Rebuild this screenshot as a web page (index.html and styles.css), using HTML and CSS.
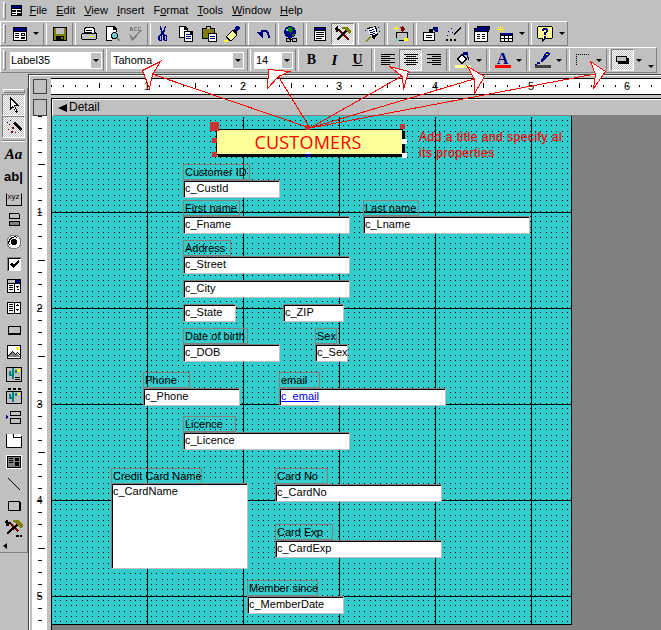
FILE: index.html
```html
<!DOCTYPE html>
<html lang="en">
<head>
<meta charset="utf-8">
<title>Form design</title>
<link rel="stylesheet" href="styles.css">
</head>
<body>
<div class="app">
  <div class="menubar">
    <span class="grip"></span>
    <svg class="ic menu-ic" viewBox="0 0 16 16"><path fill="#000" d="M1 1h14v14H1z"/><path fill="#000080" d="M2 2h12v3H2z"/><path fill="#fff" d="M2 6h12v8H2z"/><path fill="#000" d="M3 7h4v1H3zM3 9h4v1H3zM3 11h4v1H3zM9 7h4v3H9zM9 11h4v2H9z"/><path fill="#fff" d="M10 8h2v1h-2z"/></svg>
    <span class="mi"><u>F</u>ile</span><span class="mi"><u>E</u>dit</span><span class="mi"><u>V</u>iew</span><span class="mi"><u>I</u>nsert</span><span class="mi">F<u>o</u>rmat</span><span class="mi"><u>T</u>ools</span><span class="mi"><u>W</u>indow</span><span class="mi"><u>H</u>elp</span>
  </div>

  <div class="toolbar tb-std">
    <span class="grip"></span>
    <span class="btn"><svg class="ic" viewBox="0 0 16 16"><path fill="#000" d="M1 1h14v14H1z"/><path fill="#000080" d="M2 2h12v3H2z"/><path fill="#fff" d="M2 6h12v8H2z"/><path fill="#000" d="M3 7h4v1H3zM3 9h4v1H3zM3 11h4v1H3zM9 7h4v3H9zM9 11h4v2H9z"/><path fill="#fff" d="M10 8h2v1h-2z"/></svg></span><span class="drop"></span>
    <span class="sep sep7"></span>
    <span class="btn"><svg class="ic" viewBox="0 0 16 16"><path fill="#000" d="M1 1h14v14H1z"/><path fill="#808000" d="M2 2h12v12H2z"/><path fill="#c0c0c0" d="M4 2h8v6H4z"/><path fill="#000" d="M4 10h8v4H4z"/><path fill="#808000" d="M9 11h2v2H9z"/></svg></span>
    <span class="sep"></span>
    <span class="btn"><svg class="ic" viewBox="0 0 16 16"><path fill="#000" d="M4 1h9v1h1v4h1v1h1v6h-1v1H1v-1H0V8h1V7h2V2h1z"/><path fill="#fff" d="M5 2h7v1h1v4H4V3h1z"/><path fill="#c0c0c0" d="M1 8h14v5H1z"/><path fill="#ff0" d="M9 10h3v1H9z"/><path fill="#000" d="M5 4h6v1H5zM4 6h7v1H4z"/></svg></span>
    <span class="btn"><svg class="ic" viewBox="0 0 16 16"><path fill="#000" d="M2 0h8l3 3v3h-1V4H9V1H3v13h5v1H2z"/><path fill="#fff" d="M3 1h6v3h3v2H8v1H7v4h1v3H3z"/><circle cx="10.5" cy="9.5" r="3" fill="#66cccc" stroke="#000"/><path stroke="#808080" stroke-width="2" d="M13 12l3 3"/></svg></span>
    <span class="btn"><svg class="ic" viewBox="0 0 16 16"><path fill="#808080" d="M2 8h1l3 4 7-8h2l-9 11H5zM3 1h2v1l1 1v1L5 5H3V1zM7 1h3v1H8v2h2v1H7zM11 1h3v1h-2v2h2v1h-3z"/></svg></span>
    <span class="sep sep5"></span>
    <span class="btn"><svg class="ic" viewBox="0 0 16 16"><path fill="#000080" d="M5 0h1l2 6 2-6h1L9 8l2 1 1 1v4l-1 1H9l-1-1v-4L7.500 9 7 10v4l-1 1H4l-1-1v-4l1-1 2-1zM4.500 10v4h1v-4zM9.500 10v4h1v-4z"/></svg></span>
    <span class="btn"><svg class="ic" viewBox="0 0 16 16"><path fill="#000" d="M1 0h6l3 3v2h5v11H6v-4H1z"/><path fill="#fff" d="M2 1h4v3h3v1H6v6H2z"/><path fill="#fff" d="M7 6h5v3h2v6H7z"/><path fill="#000080" d="M8 8h5v1H8zM8 10h5v1H8zM8 12h5v1H8z"/></svg></span>
    <span class="btn"><svg class="ic" viewBox="0 0 16 16"><path fill="#000" d="M1 2h4V0h5v2h4v5h2v9H7v-3H1z"/><path fill="#808000" d="M2 3h11v4H7v5H2z"/><path fill="#c0c0c0" d="M6 1h3v2H6z"/><path fill="#fff" d="M8 8h7v7H8z"/><path fill="#000080" d="M9 10h5v1H9zM9 12h5v1H9z"/></svg></span>
    <span class="btn"><svg class="ic" viewBox="0 0 16 16"><path fill="#000080" d="M12 0h2l2 2v1l-4 3-2-2z"/><path fill="#000" d="M8 4h2l3 3v2L7 15H5L2 12v-2z"/><path fill="#ffff99" d="M8 5l4 4-5 5-4-3z"/><path fill="#ff0" d="M0 14h4v2H0z"/></svg></span>
    <span class="sep sep8"></span>
    <span class="btn"><svg class="ic" viewBox="0 0 16 16"><path fill="none" stroke="#000080" stroke-width="2" d="M6 6c3-3 8-1 8 6"/><path fill="#000080" d="M1 6h7v7z"/></svg></span>
    <span class="sep sep5"></span>
    <span class="btn"><svg class="ic" viewBox="0 0 16 16"><circle cx="7" cy="6" r="6" fill="#000080"/><path fill="#008000" d="M5 1h4l1 3-3 3-2-2zM9 8h3l-2 3z"/><path fill="#66cccc" d="M3 3h2v2H3z"/><path fill="none" stroke="#000" d="M3 12h4v3H3zM9 12h4v3H9zM6 13.500h4"/></svg></span>
    <span class="sep"></span>
    <span class="btn"><svg class="ic" viewBox="0 0 16 16"><path fill="#000" d="M2 1h12v14H2z"/><path fill="#fff" d="M3 5h10v9H3z"/><path fill="#000080" d="M3 2h10v2H3z"/><path fill="#000" d="M4 6h8v1H4zM4 8h8v1H4zM4 10h8v1H4zM4 12h6v1H4z"/></svg></span>
    <span class="btn on"><svg class="ic" viewBox="0 0 16 16"><path fill="none" stroke="#800000" stroke-width="2" d="M4 4l10 10"/><path fill="#000" d="M0 2l3-2v3h2l-2 3H1z"/><path fill="none" stroke="#000" stroke-width="2" d="M2 14l9-9"/><path fill="#808000" d="M7 1h5l4 4v2l-2 1-5-5H7z"/></svg></span>
    <span class="sep"></span>
    <span class="btn"><svg class="ic" viewBox="0 0 16 16"><path fill="#000" d="M3 2l9-2 2 9-2 1-2 4-1-1z"/><path fill="#fff" d="M4 3l7-2 2 7-7 2z"/><path fill="#000080" d="M5 4l5-1v1l-5 1zM6 6l5-1v1l-5 1zM6 8l5-1v1l-5 1z"/><path fill="#808000" d="M1 15l5-5 1 1-5 5z"/><path fill="#000080" d="M14 1h1v1h-1zM15 5h1v1h-1zM1 4h1v1H1z"/></svg></span>
    <span class="sep"></span>
    <span class="btn"><svg class="ic" viewBox="0 0 16 16"><path fill="#ff0" d="M3 0h1v5H3zM0 2h6v1H0z"/><path fill="#000" d="M3 6h12v9H3z"/><path fill="#c0c0c0" d="M4 7h10v7H4z"/><path fill="#66cccc" d="M3 11l3 4H3z"/><path fill="#ff0" d="M11 12h4v3h-4z"/><path fill="#800000" d="M7 1l3-1 2 3-3 3z"/></svg></span>
    <span class="sep"></span>
    <span class="btn"><svg class="ic" viewBox="0 0 16 16"><path fill="#000" d="M1 6h6V3h4v3h2v9H1z"/><path fill="#fff" d="M2 7h10v7H2z"/><path fill="#000" d="M4 9h6v1H4zM4 11h6v1H4z"/><path fill="#000080" d="M11 1h5v5h-2l-3-2z"/></svg></span>
    <span class="btn"><svg class="ic" viewBox="0 0 16 16"><path fill="#000" d="M8 8l7-7 1 1-7 7zM1 13h2v2H1zM5 13h2v2H5zM9 13h2v2H9z"/><path fill="#000080" d="M3 5h1v1H3zM6 2h1v1H6zM7 6h1v1H7zM2 9h1v1H2z"/></svg></span>
    <span class="sep"></span>
    <span class="btn"><svg class="ic" viewBox="0 0 16 16"><path fill="#000" d="M3 0h13v4h-1v2H0V2h3z"/><path fill="#000080" d="M4 1h11v2H4zM1 3h12v2H1z"/><path fill="#000" d="M0 5h14v11H0z"/><path fill="#fff" d="M1 6h12v9H1z"/><path fill="#000" d="M3 8h3v1H3zM3 10h3v1H3zM3 12h3v1H3zM8 8h3v1H8zM8 10h3v1H8zM8 12h3v1H8z"/></svg></span>
    <span class="btn"><svg class="ic" viewBox="0 0 16 16"><path fill="#ff0" d="M3 0h1v6H3zM0 3h7v1H0zM1 1h1v1H1zM5 1h1v1H5zM1 5h1v1H1zM5 5h1v1H5z"/><path fill="#000" d="M3 7h13v9H3z"/><path fill="#000080" d="M4 7h11v2H4z"/><path fill="#fff" d="M4 10h11v5H4z"/><path fill="#000" d="M7 10h1v5H7zM11 10h1v5h-1zM4 12h11v1H4z"/></svg></span><span class="drop drop11"></span>
    <span class="sep"></span>
    <span class="btn"><svg class="ic" viewBox="0 0 16 16"><path fill="#000" d="M1 0h14v1h1v11h-1v1H8l-3 3v-3H1v-1H0V1h1z"/><path fill="#ffff99" d="M1 1h14v11H7l-1 1v-1H1z"/><path fill="#000080" d="M5 3h1V2h4v1h1v3h-1v1H9v2H7V6h2V4H7v1H5zM7 10h2v2H7z"/></svg></span><span class="drop drop11"></span>
  </div>

  <div class="toolbar tb-fmt">
    <span class="grip"></span>
    <span class="combo combo-obj"><span class="val">Label35</span><span class="cbtn"></span></span>
    <span class="sep"></span>
    <span class="combo combo-font"><span class="val">Tahoma</span><span class="cbtn"></span></span>
    <span class="sep sep10"></span>
    <span class="combo combo-size"><span class="val">14</span><span class="cbtn"></span></span>
    <span class="sep sep7"></span>
    <span class="btn"><b class="tx-b">B</b></span>
    <span class="btn"><i class="tx-i">I</i></span>
    <span class="btn"><u class="tx-u">U</u></span>
    <span class="sep sep7"></span>
    <span class="btn"><svg class="ic" viewBox="0 0 16 16"><path fill="#000" d="M1 2h14v1H1zM1 4h9v1H1zM1 6h14v1H1zM1 8h9v1H1zM1 10h14v1H1zM1 12h9v1H1z"/></svg></span>
    <span class="btn on"><svg class="ic" viewBox="0 0 16 16"><path fill="#000" d="M1 2h14v1H1zM3 4h10v1H3zM1 6h14v1H1zM3 8h10v1H3zM1 10h14v1H1zM3 12h10v1H3z"/></svg></span>
    <span class="btn"><svg class="ic" viewBox="0 0 16 16"><path fill="#000" d="M1 2h14v1H1zM6 4h9v1H6zM1 6h14v1H1zM6 8h9v1H6zM1 10h14v1H1zM6 12h9v1H6z"/></svg></span>
    <span class="sep sep6"></span>
    <span class="btn"><svg class="ic" viewBox="0 0 16 16"><path fill="#000" d="M7 2l6 5-6 5-6-5z"/><path fill="#fff" d="M7 4l4 3-4 3-4-3z"/><path fill="#000080" d="M8 0h5v2l1 6h-1l-1-5H8z"/><path fill="#ffff99" d="M0 13h16v3H0z"/></svg></span><span class="drop"></span>
    <span class="sep sep7"></span>
    <span class="btn"><span class="tx-a">A</span></span><span class="drop"></span>
    <span class="sep sep7"></span>
    <span class="btn"><svg class="ic" viewBox="0 0 16 16"><path fill="#000080" d="M11 0h3l1 2-7 8H6V8z"/><path fill="#ff0" d="M11 2h2v1h-2z"/><path fill="#000080" d="M2 10h3v2H2zM0 12h2v1H0z"/><path fill="#404040" d="M0 13h16v3H0z"/></svg></span><span class="drop"></span>
    <span class="sep sep7"></span>
    <span class="btn"><svg class="ic" viewBox="0 0 16 16"><path fill="#000" d="M1 2h1v1H1zM3 2h1v1H3zM5 2h1v1H5zM7 2h1v1H7zM9 2h1v1H9zM11 2h1v1h-1zM13 2h1v1h-1zM1 4h1v1H1zM1 6h1v1H1zM1 8h1v1H1zM1 10h1v1H1zM1 12h1v1H1z"/></svg></span><span class="drop"></span>
    <span class="sep sep7"></span>
    <span class="btn on"><svg class="ic" viewBox="0 0 16 16"><path fill="#000" d="M1 4h11v2h2v6H3v-2H1z"/><path fill="#c0c0c0" d="M2 5h9v4H2z"/></svg></span><span class="drop drop9"></span>
    <span class="drop drop-end"></span>
  </div>

  <div class="workspace">
    <div class="toolbox">
      <span class="hgrip"></span>
      <span class="tool on"><svg class="ic" viewBox="0 0 16 16"><path fill="#000" d="M4 0l9 9H9l3 6-2 1-3-6-3 3z"/><path fill="#fff" d="M5 2.500l5.500 5.500H7.500l3 6-1 .5-3-6-1.500 2z"/></svg></span>
      <span class="tool on"><svg class="ic" viewBox="0 0 16 16"><path fill="#000" d="M7 4l2-2 7 8-2 2z"/><path fill="#800000" d="M3 5h1v1H3zM6 8h2v2H6zM2 10h1v1H2zM5 12h2v2H5zM9 13h1v1H9z"/><path fill="#000080" d="M4 1h1v1H4zM1 3h1v1H1z"/></svg></span>
      <span class="tbsep"></span>
      <span class="tool"><i class="tx-aa">Aa</i></span>
      <span class="tool"><b class="tx-ab">ab|</b></span>
      <span class="tool"><span class="frame-xyz">xyz</span></span>
      <span class="tool"><svg class="ic" viewBox="0 0 16 16"><path fill="#000" d="M3 1h10v1h1v5H3zM3 9h11v5H3z"/><path fill="#c0c0c0" d="M4 2h9v4H4z"/><path fill="#808080" d="M4 10h9v3H4z"/></svg></span>
      <span class="tool"><svg class="ic" viewBox="0 0 16 16"><circle cx="8" cy="8" r="7" fill="#fff" stroke="#808080"/><circle cx="8" cy="8" r="3" fill="#000"/><path fill="none" stroke="#000" d="M3.500 11.500a6 6 0 0 1 8-8"/></svg></span>
      <span class="tool"><svg class="ic" viewBox="0 0 16 16"><path fill="#808080" d="M1 1h14v14H1z"/><path fill="#000" d="M2 2h12v12H2z"/><path fill="#fff" d="M3 3h12v12H3z"/><path fill="#000" d="M4 8l2-1 2 2 4-5h1v2l-5 6H7z"/></svg></span>
      <span class="tool"><svg class="ic" viewBox="0 0 16 16"><path fill="#000" d="M1 1h14v14H1z"/><path fill="#c0c0c0" d="M2 2h7v3H2z"/><path fill="#000080" d="M10 2h4v3h-4z"/><path fill="#fff" d="M2 6h12v8H2z"/><path fill="#000" d="M3 7h4v1H3zM3 9h4v1H3zM3 11h4v1H3zM8 6h1v8H8zM10 8h3l-1.500 2zM10 12h3l-1.500-1.500z"/></svg></span>
      <span class="tool"><svg class="ic" viewBox="0 0 16 16"><path fill="#000" d="M1 2h14v12H1z"/><path fill="#fff" d="M2 3h12v10H2z"/><path fill="#000" d="M3 4h4v1H3zM3 6h4v1H3zM3 8h4v1H3zM3 10h4v1H3zM8 3h1v10H8zM10 6h3l-1.500-2zM10 9h3l-1.500 2z"/></svg></span>
      <span class="tool"><svg class="ic" viewBox="0 0 16 16"><path fill="#fff" d="M2 4h12v8H2z"/><path fill="#000" d="M2 4h12v1H2zM2 4h1v7H2zM2 11h13v2H2zM14 4h1v9h-1z"/><path fill="#c0c0c0" d="M3 5h11v6H3z"/></svg></span>
      <span class="tool"><svg class="ic" viewBox="0 0 16 16"><path fill="#000" d="M1 1h14v14H1z"/><path fill="#fff" d="M2 2h12v12H2z"/><path fill="#ff0" d="M10 3h3v3h-3z"/><path fill="#808080" d="M2 13l4-5 3 3 2-2 3 4z"/><path fill="#000" d="M2 12l4-5 3 3 2-2 3 3v1l-3-3-2 2-3-3-4 5z"/></svg></span>
      <span class="tool"><svg class="ic" viewBox="0 0 16 16"><path fill="#000" d="M0 1h16v15H0z"/><path fill="#c0c0c0" d="M1 2h14v13H1z"/><path fill="#ff0" d="M11 3h3v3h-3z"/><path fill="#008080" d="M6 2h2v11H6zM3 5h2v3h1v2H3zM9 4h2v3H9v2z"/><path fill="#000" d="M9 11h5v1H9zM9 13h5v1H9z"/></svg></span>
      <span class="tool"><svg class="ic" viewBox="0 0 16 16"><path fill="#000" d="M0 3h16v13H0z"/><path fill="#c0c0c0" d="M1 4h14v11H1z"/><path fill="#000" d="M2 0h3v2H2zM7 0h3v2H7zM12 0h3v2h-3z"/><path fill="#008080" d="M6 4h2v10H6zM3 6h2v3h1v2H3zM9 5h2v3H9v2z"/><path fill="#ff0" d="M12 5h2v2h-2z"/></svg></span>
      <span class="tool"><svg class="ic" viewBox="0 0 16 16"><path fill="#000" d="M4 1h11v1H4zM4 5h11v1H4zM4 1h1v5H4zM14 1h1v5h-1zM4 8h11v1H4zM4 13h11v1H4zM4 8h1v6H4zM14 8h1v6h-1z"/><path fill="#000080" d="M0 5l3 2-3 2z"/></svg></span>
      <span class="tool"><svg class="ic" viewBox="0 0 16 16"><path fill="#fff" d="M0 2h6v2h2V2h7v2h1v11H0z"/><path fill="#000" d="M0 2h1v13H0zM0 15h16v1H0zM15 4h1v12h-1zM7 2h1v3h7v1H7z"/></svg></span>
      <span class="tool"><svg class="ic" viewBox="0 0 16 16"><path fill="#fff" d="M0 1h16v14H0z"/><path fill="#000" d="M1 2h14v12H1z"/><path fill="#808080" d="M2 3h12v10H2z"/><path fill="#000" d="M3 4h4v1H3zM9 4h4v3H9zM3 6h4v1H3zM3 8h4v1H3zM9 8h4v4H9z"/></svg></span>
      <span class="tool"><svg class="ic" viewBox="0 0 16 16"><path stroke="#000" fill="none" d="M2 2l12 12"/></svg></span>
      <span class="tool"><svg class="ic" viewBox="0 0 16 16"><path fill="none" stroke="#000" d="M2.500 3.500h11v9h-11z"/><path fill="#000" d="M2 12h13v1H2zM14 4h1v9h-1z"/></svg></span>
      <span class="tool"><svg class="ic ic-lg" viewBox="0 0 16 16"><path fill="none" stroke="#800000" stroke-width="2" d="M4 3l8 8"/><path fill="#000" d="M0 2l3-2v3h2l-2 3H1zM10 14h2v2h-2zM13 14h2v2h-2z"/><path fill="none" stroke="#000" stroke-width="2" d="M2 13l9-8"/><path fill="#808000" d="M7 1h5l4 4v2l-2 1-5-5H7z"/></svg></span>
      <span class="more"></span>
    </div>

    <div class="window">
      <div class="corner"></div>
      <div class="hruler"><span>1</span><span>2</span><span>3</span><span>4</span><span>5</span><span>6</span></div>
      <div class="corner corner2"></div>
      <div class="section"><span class="sec-arrow"></span>Detail</div>
      <div class="vruler"><span>1</span><span>2</span><span>3</span><span>4</span><span>5</span></div>
      <div class="client">
        <div class="canvas">
          <svg class="grid" width="520" height="508" viewBox="0 0 520 508">
            <defs>
              <g id="dotrow"><path d="M0 0h1v1H0zM5 0h1v1H5zM11 0h1v1h-1z"/></g>
              <pattern id="dots" patternUnits="userSpaceOnUse" x="3" y="4" width="16" height="16">
                <use href="#dotrow" y="0"/><use href="#dotrow" y="5"/><use href="#dotrow" y="11"/>
              </pattern>
              <pattern id="lines" patternUnits="userSpaceOnUse" width="96" height="96">
                <path d="M95 0h1v96h-1zM0 0h96v1H0z"/>
              </pattern>
            </defs>
            <rect width="520" height="508" fill="url(#dots)"/>
            <rect y="1" width="520" height="507" fill="url(#lines)"/>
          </svg>

          <div class="title">CUSTOMERS</div>
          <span class="h h-tl"></span><span class="h h-ml"></span><span class="h h-bl"></span><span class="h h-tm"></span><span class="h h-tr"></span>
          <span class="h2 h-mr"></span><span class="h2 h-br"></span><span class="h3 h-bm"></span>
          <div class="note">Add a title and specify al<br>its properties</div>

          <div class="lbl l-custid">Customer ID</div><div class="fld f-custid">c_CustId</div>
          <div class="lbl l-fname">First name</div><div class="fld f-fname">c_Fname</div>
          <div class="lbl l-lname">Last name</div><div class="fld f-lname">c_Lname</div>
          <div class="lbl l-addr">Address</div><div class="fld f-street">c_Street</div>
          <div class="fld f-city">c_City</div>
          <div class="fld f-state">c_State</div>
          <div class="fld f-zip">c_ZIP</div>
          <div class="lbl l-dob">Date of birth</div><div class="fld f-dob">c_DOB</div>
          <div class="lbl l-sex">Sex</div><div class="fld f-sex">c_Sex</div>
          <div class="lbl l-phone">Phone</div><div class="fld f-phone">c_Phone</div>
          <div class="lbl l-email">email</div><div class="fld f-email"><a class="lnk">c_email</a></div>
          <div class="lbl l-lic">Licence</div><div class="fld f-lic">c_Licence</div>
          <div class="lbl l-ccn">Credit Card Name</div><div class="fld f-ccn">c_CardName</div>
          <div class="lbl l-cno">Card No</div><div class="fld f-cno">c_CardNo</div>
          <div class="lbl l-cexp">Card Exp</div><div class="fld f-cexp">c_CardExp</div>
          <div class="lbl l-mem">Member since</div><div class="fld f-mem">c_MemberDate</div>
        </div>
      </div>
    </div>
  </div>
</div>

<svg class="arrows" width="661" height="630" viewBox="0 0 661 630">
  <path d="M310 128L152 74M310 128L278 76M310 128L402 76M310 128L474 79M310 128L595 74" fill="none" stroke="#f00"/>
  <path class="head" d="M160.500 61.500L142.500 70.500L149.500 88.500L152.500 74.500z"/>
  <path class="head" d="M268.500 69.500L289.500 71.500L278.500 76.500L267.500 88.500z"/>
  <path class="head" d="M389.500 66.500L408.500 71.500L403.500 89.500L402.500 76.500z"/>
  <path class="head" d="M467.500 66.500L484.500 76.500L474.500 93.500L474.500 79.500z"/>
  <path class="head" d="M590.500 61.500L605.500 71.500L593.500 88.500L595.500 74.500z"/>
</svg>
</body>
</html>
```
FILE: styles.css
```css
* { box-sizing: border-box; }
html, body { margin: 0; padding: 0; }
body {
  width: 661px;
  height: 630px;
  overflow: hidden;
  position: relative;
  background: #c0c0c0;
  font: 11px/15px "Liberation Sans", sans-serif;
  color: #000;
}
.app { display: flex; flex-direction: column; height: 630px; }

.ic { width: 16px; height: 16px; display: block; shape-rendering: crispEdges; flex: none; }
.ic-lg { width: 18px; height: 18px; }

.grip {
  width: 3px;
  align-self: stretch;
  margin: 2px;
  border: 1px solid;
  border-color: #fff #808080 #808080 #fff;
  flex: none;
}

/* menu */
.menubar { height: 21px; display: flex; align-items: center; flex: none; }
.menubar .grip { margin-left: 3px; margin-right: 0; }
.menu-ic { margin: 0 2px 0 4px; width: 13px; height: 13px; }
.mi { padding: 0 4.5px; font-size: 11px; white-space: nowrap; }
.mi:first-of-type { padding-left: 5px; }

/* toolbars */
.toolbar {
  height: 25px;
  display: flex;
  align-items: center;
  flex: none;
  border: 1px solid;
  border-color: #fff #808080 #808080 #fff;
}
.tb-std { width: 568px; }
.tb-fmt { width: 657px; height: 26px; margin-top: 1px; }
.btn {
  width: 23px;
  height: 22px;
  display: flex;
  align-items: center;
  justify-content: center;
  flex: none;
}
.btn.on, .tool.on {
  border: 1px solid;
  border-color: #808080 #fff #fff #808080;
  background: repeating-conic-gradient(#fff 0 25%, #c0c0c0 0 50%) 0 0 / 2px 2px;
}
.drop {
  width: 10px;
  height: 22px;
  flex: none;
  display: flex;
  align-items: center;
  justify-content: center;
}
.drop::after, .cbtn::after, .more::after {
  content: "";
  border-top: 3px solid #000;
  border-left: 3px solid transparent;
  border-right: 3px solid transparent;
}
.drop11 { width: 11px; }
.drop9 { width: 9px; }
.drop-end { margin-left: 3px; align-items: flex-end; padding-bottom: 3px; }
.sep {
  width: 6px;
  height: 22px;
  flex: none;
  display: flex;
  justify-content: center;
}
.sep::after {
  content: "";
  width: 2px;
  height: 100%;
  border-left: 1px solid #808080;
  border-right: 1px solid #fff;
}
.sep5 { width: 5px; }
.sep6 { width: 6px; }
.sep7 { width: 7px; }
.sep8 { width: 8px; }
.sep10 { width: 10px; }

.combo {
  height: 17px;
  background: #fff;
  display: flex;
  align-items: center;
  flex: none;
  justify-content: space-between;
  margin-left: 2px;
  padding-left: 1px;
  padding-right: 1px;
}
.combo-obj { width: 92px; }
.combo-font { width: 133px; margin-left: 3px; padding-left: 2px; }
.combo-size { width: 39px; margin-left: 0; padding-left: 2px; }
.val { font-size: 11px; }
.cbtn {
  width: 10px;
  height: 15px;
  background: #c0c0c0;
  display: flex;
  align-items: center;
  justify-content: center;
}
.tx-b { font: bold 14px "Liberation Serif", serif; }
.tx-i { font: italic bold 15px "Liberation Serif", serif; }
.tx-u { font: bold 14px "Liberation Serif", serif; }
.tx-a {
  width: 16px;
  height: 16px;
  font: bold 16px/13px "Liberation Serif", serif;
  color: #000080;
  text-align: center;
  border-bottom: 3px solid #f00;
}

/* workspace */
.workspace { flex: 1; display: flex; min-height: 0; margin-top: 1px; }
.toolbox {
  width: 28px;
  flex: none;
  margin-top: 14px;
  padding: 1px 0 0 0;
  height: 465px;
  display: flex;
  flex-direction: column;
  align-items: center;
  border-bottom: 1px solid #808080;
  border-right: 1px solid #808080;
}
.hgrip {
  width: 22px;
  height: 4px;
  border: 1px solid;
  border-color: #fff #808080 #808080 #fff;
  margin-bottom: 1px;
  flex: none;
}
.tool {
  width: 23px;
  height: 22px;
  flex: none;
  display: flex;
  align-items: center;
  justify-content: center;
}
.tbsep {
  width: 23px;
  height: 2px;
  border-top: 1px solid #808080;
  border-bottom: 1px solid #fff;
  margin: 2px 0 1px;
  flex: none;
}
.tx-aa { font: italic bold 15px "Liberation Serif", serif; }
.tx-ab { font: bold 13px "Liberation Sans", sans-serif; }
.frame-xyz {
  width: 16px;
  height: 13px;
  border: 1px solid #000;
  border-top-color: transparent;
  font-size: 8px;
  line-height: 6px;
  text-align: center;
  margin-top: 3px;
  display: block;
}
.more { height: 14px; display: flex; align-items: center; align-self: flex-start; padding-left: 3px; }
.more::after {
  border-top: 3px solid transparent;
  border-bottom: 3px solid transparent;
  border-right: 4px solid #000;
  border-left: 0;
}

.window {
  flex: 1;
  min-width: 0;
  border-left: 1px solid #404040;
  border-top: 1px solid #404040;
  padding: 3px 0 0 3px;
  display: grid;
  grid-template-columns: 15px 1fr;
  grid-template-rows: 17px 18px 1fr;
  column-gap: 4px;
  row-gap: 3px;
  box-shadow: inset 1px 1px 0 #fff;
}
.window > .vruler, .window > .client { margin-top: -3px; }
.corner {
  margin: 1px 0 1px 1px;
  background: #c0c0c0;
  border: 1px solid;
  border-color: #fff #808080 #808080 #fff;
  outline: 1px solid #404040;
  outline-offset: -1px;
}
.corner2 { margin-bottom: 0; }
.hruler {
  background-color: #fff;
  border-top: 1px solid #000;
  border-bottom: 1px solid #000;
  padding-left: 48px;
  display: flex;
  align-items: center;
  background-image:
    linear-gradient(90deg, #000 1px, transparent 0),
    linear-gradient(90deg, #000 1px, transparent 0);
  background-size: 12px 2px, 96px 5px;
  background-position: 0 6px, 48px 4px;
  background-repeat: repeat-x;
}
.hruler span {
  flex: 0 0 96px;
  text-align: center;
}
.section {
  background: #c0c0c0;
  border-top: 1px solid #000;
  border-left: 1px solid #000;
  box-shadow: inset 1px 1px 0 #fff, inset 0 -1px 0 #808080;
  display: flex;
  align-items: center;
  padding-left: 6px;
  gap: 2px;
  font-size: 12px;
}
.sec-arrow {
  width: 0;
  height: 0;
  border-top: 4px solid transparent;
  border-bottom: 4px solid transparent;
  border-right: 9px solid #000;
}
.vruler {
  background-color: #fff;
  padding-top: 48px;
  display: flex;
  flex-direction: column;
  overflow: hidden;
  background-image:
    linear-gradient(#000 1px, transparent 0),
    linear-gradient(#000 1px, transparent 0);
  background-size: 4px 12px, 7px 96px;
  background-position: 6px 0, 6px 48px;
  background-repeat: repeat-y;
}
.vruler span {
  flex: 0 0 96px;
  display: flex;
  align-items: center;
  justify-content: center;
}
.client {
  background: #808080;
  border-left: 1px solid #000;
  overflow: hidden;
}
.canvas {
  position: relative;
  width: 520px;
  height: 509px;
  background: #33cccc;
  border-right: 1px solid #000;
  border-bottom: 1px solid #000;
}
.grid { position: absolute; left: 0; top: 0; display: block; shape-rendering: crispEdges; }

/* controls placed on the design canvas */
.lbl, .fld, .title, .note, .h, .h2, .h3 { position: absolute; white-space: nowrap; }
.lbl {
  height: 16px;
  border: 1px solid #808080;
  padding-left: 1px;
  line-height: 14px;
}
.fld {
  height: 18px;
  background: #fff;
  border: 1px solid;
  border-color: #808080 #c0c0c0 #c0c0c0 #808080;
  box-shadow: inset 1px 1px 0 #000;
  padding: 0 0 0 1px;
  line-height: 15px;
}
.lnk { color: #00f; text-decoration: underline; }

.title {
  left: 164px;
  top: 13px;
  width: 187px;
  height: 26px;
  background: #ffff99;
  border: 1px solid #000;
  box-shadow: 2px 2px 0 #000;
  color: #f00;
  font: 18px/24px "Open Sans", "Liberation Sans", sans-serif;
  letter-spacing: .2px;
  text-align: center;
  padding-right: 3px;
}
.h { background: #cc3333; width: 5px; height: 5px; }
.h-tl { left: 158px; top: 6px; width: 9px; height: 9px; }
.h-ml { left: 160px; top: 22px; }
.h-bl { left: 160px; top: 36px; }
.h-tm { left: 253px; top: 9px; }
.h-tr { left: 348px; top: 8px; }
.h2 { background: #fff; width: 5px; height: 5px; }
.h-mr { left: 350px; top: 23px; }
.h-br { left: 350px; top: 37px; }
.h3 { background: #000080; border-top: 2px solid #fff; width: 6px; height: 5px; left: 253px; top: 36px; }
.note {
  left: 367px;
  top: 13px;
  color: #f00;
  font-size: 12px;
  line-height: 16px;
  letter-spacing: .5px;
  text-shadow: 0 0 1px rgba(255, 0, 0, .5);
}

.l-custid { left: 131px; top: 48px; width: 67px; }
.f-custid { left: 131px; top: 64px; width: 97px; }
.l-fname { left: 131px; top: 84px; width: 57px; }
.f-fname { left: 131px; top: 100px; width: 167px; }
.l-lname { left: 311px; top: 84px; width: 56px; }
.f-lname { left: 311px; top: 100px; width: 167px; }
.l-addr { left: 131px; top: 124px; width: 48px; }
.f-street { left: 131px; top: 140px; width: 167px; }
.f-city { left: 131px; top: 164px; width: 167px; }
.f-state { left: 131px; top: 188px; width: 53px; }
.f-zip { left: 231px; top: 188px; width: 61px; }
.l-dob { left: 131px; top: 212px; width: 65px; }
.f-dob { left: 131px; top: 228px; width: 97px; }
.l-sex { left: 263px; top: 212px; width: 22px; }
.f-sex { left: 263px; top: 228px; width: 33px; }
.l-phone { left: 91px; top: 256px; width: 47px; }
.f-phone { left: 91px; top: 272px; width: 97px; }
.l-email { left: 227px; top: 256px; width: 41px; }
.f-email { left: 227px; top: 272px; width: 167px; }
.l-lic { left: 131px; top: 300px; width: 53px; }
.f-lic { left: 131px; top: 316px; width: 167px; }
.l-ccn { left: 59px; top: 352px; width: 91px; }
.f-ccn { left: 59px; top: 367px; width: 137px; height: 86px; }
.l-cno { left: 223px; top: 352px; width: 53px; }
.f-cno { left: 223px; top: 368px; width: 167px; }
.l-cexp { left: 223px; top: 408px; width: 58px; }
.f-cexp { left: 223px; top: 424px; width: 167px; }
.l-mem { left: 195px; top: 464px; width: 71px; }
.f-mem { left: 195px; top: 480px; width: 97px; }

.arrows { position: absolute; left: 0; top: 0; shape-rendering: crispEdges; pointer-events: none; }
.head { fill: #fff; stroke: #f00; }
```
